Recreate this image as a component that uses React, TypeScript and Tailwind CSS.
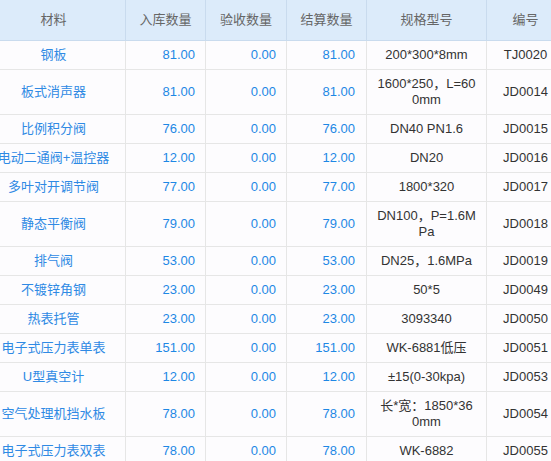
import React from "react";

type Row = {
  name: string;
  inQty: string;
  checkQty: string;
  settleQty: string;
  spec: string;
  code: string;
};

const rows: Row[] = [
  { name: "钢板", inQty: "81.00", checkQty: "0.00", settleQty: "81.00", spec: "200*300*8mm", code: "TJ0020" },
  { name: "板式消声器", inQty: "81.00", checkQty: "0.00", settleQty: "81.00", spec: "1600*250，L=600mm", code: "JD0014" },
  { name: "比例积分阀", inQty: "76.00", checkQty: "0.00", settleQty: "76.00", spec: "DN40 PN1.6", code: "JD0015" },
  { name: "电动二通阀+温控器", inQty: "12.00", checkQty: "0.00", settleQty: "12.00", spec: "DN20", code: "JD0016" },
  { name: "多叶对开调节阀", inQty: "77.00", checkQty: "0.00", settleQty: "77.00", spec: "1800*320", code: "JD0017" },
  { name: "静态平衡阀", inQty: "79.00", checkQty: "0.00", settleQty: "79.00", spec: "DN100，P=1.6MPa", code: "JD0018" },
  { name: "排气阀", inQty: "53.00", checkQty: "0.00", settleQty: "53.00", spec: "DN25，1.6MPa", code: "JD0019" },
  { name: "不镀锌角钢", inQty: "23.00", checkQty: "0.00", settleQty: "23.00", spec: "50*5", code: "JD0049" },
  { name: "热表托管", inQty: "23.00", checkQty: "0.00", settleQty: "23.00", spec: "3093340", code: "JD0050" },
  { name: "电子式压力表单表", inQty: "151.00", checkQty: "0.00", settleQty: "151.00", spec: "WK-6881低压", code: "JD0051" },
  { name: "U型真空计", inQty: "12.00", checkQty: "0.00", settleQty: "12.00", spec: "±15(0-30kpa)", code: "JD0053" },
  { name: "空气处理机挡水板", inQty: "78.00", checkQty: "0.00", settleQty: "78.00", spec: "长*宽：1850*360mm", code: "JD0054" },
  { name: "电子式压力表双表", inQty: "78.00", checkQty: "0.00", settleQty: "78.00", spec: "WK-6882", code: "JD0055" },
];

const headers = [
  { label: "材料", w: "w-[144px]" },
  { label: "入库数量", w: "w-[80px]" },
  { label: "验收数量", w: "w-[81px]" },
  { label: "结算数量", w: "w-[80px]" },
  { label: "规格型号", w: "w-[120px]" },
  { label: "编号", w: "w-[78px]" },
];

const cell = "flex shrink-0 items-center border-r border-[#e6e6e6] py-[6px] leading-[16px]";

export default function App() {
  return (
    <div
      className="h-[461px] w-[551px] overflow-hidden bg-[#fdfcfe] text-[13px]"
      style={{ fontFamily: '"Liberation Sans", "Noto Sans CJK SC", sans-serif' }}
    >
      <div className="-ml-[18px] w-[583px]">
        <div className="flex h-[41px] border-b border-[#c9dbee] bg-[#dcebfa] text-[#666]">
          {headers.map((h) => (
            <div
              key={h.label}
              className={`${h.w} flex shrink-0 items-center justify-center border-r border-[#c9dbee]`}
            >
              {h.label}
            </div>
          ))}
        </div>
        {rows.map((r) => (
          <div key={r.code} className="flex border-b border-[#e6e6e6]">
            <div className={`${cell} w-[144px] justify-center whitespace-nowrap text-[#2f8ae4]`}>
              {r.name}
            </div>
            <div className={`${cell} w-[80px] justify-end pr-[10px] text-[#1e88e5]`}>{r.inQty}</div>
            <div className={`${cell} w-[81px] justify-end pr-[10px] text-[#1e88e5]`}>{r.checkQty}</div>
            <div className={`${cell} w-[80px] justify-end pr-[11px] text-[#1e88e5]`}>{r.settleQty}</div>
            <div className={`${cell} w-[120px] justify-center px-[10px] text-center break-all text-[#333]`}>
              {r.spec}
            </div>
            <div className={`${cell} w-[78px] justify-center text-[#333]`}>{r.code}</div>
          </div>
        ))}
      </div>
    </div>
  );
}
